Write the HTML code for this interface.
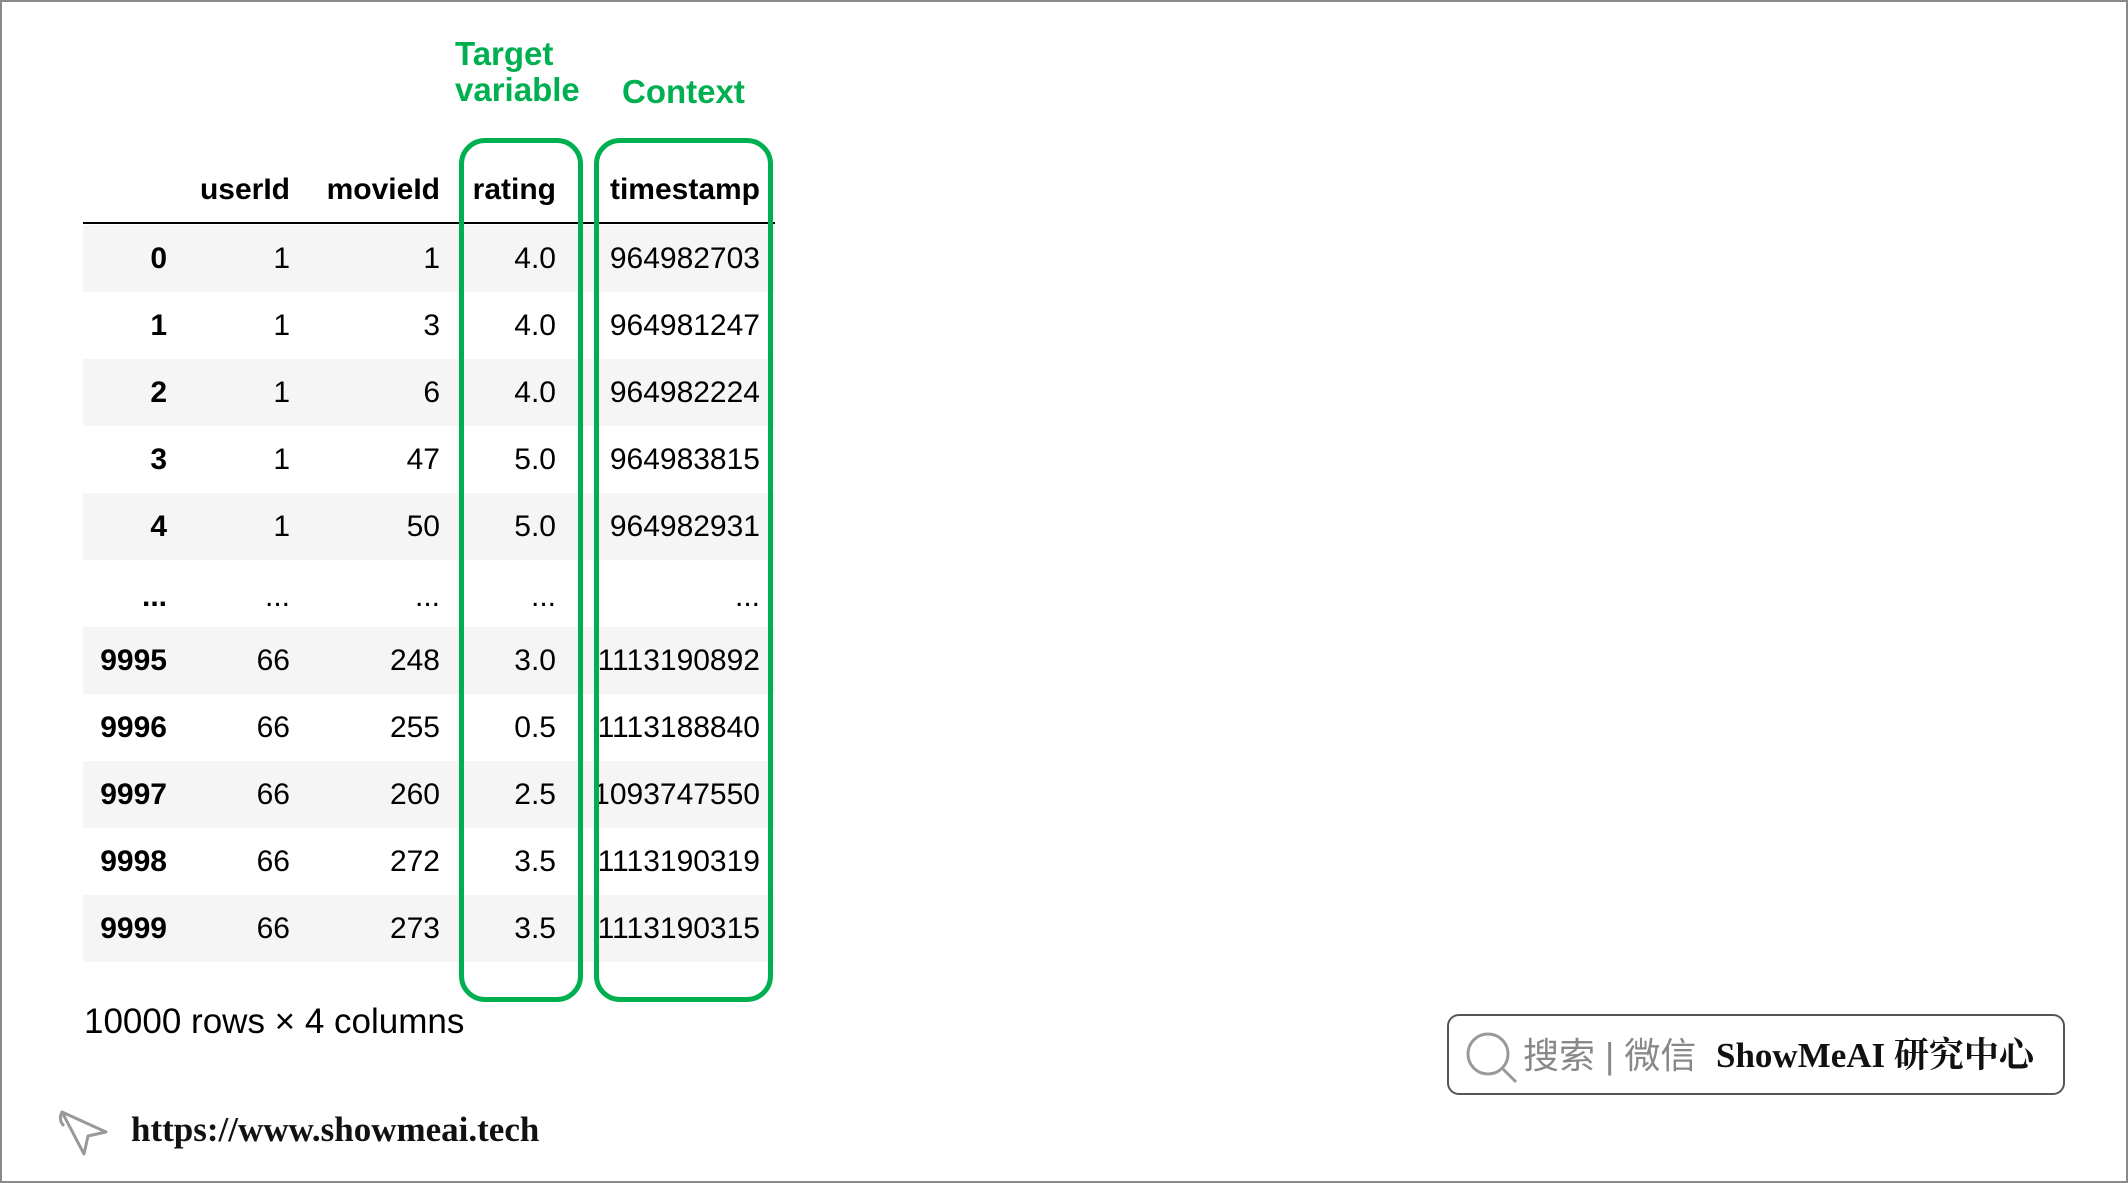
<!DOCTYPE html>
<html><head><meta charset="utf-8"><style>
body{margin:0;width:2128px;height:1183px;background:#fff;position:relative;overflow:hidden;font-family:"Liberation Sans",Arial,sans-serif;}
.frame{position:absolute;left:0;top:0;width:2124px;height:1179px;border:2px solid #8a8a8a;}
.g{position:absolute;color:#00b050;font-weight:bold;font-size:33px;line-height:36px;}
.box{position:absolute;border:5px solid #00b050;border-radius:26px;box-sizing:border-box;}
.row{position:absolute;left:83px;width:692px;height:67px;}
.row.s{background:#f5f5f5;}
.c{position:absolute;font-size:30px;line-height:67px;text-align:right;color:#000;}
.h{font-weight:bold;}
</style></head><body>
<div class="frame"></div>
<div class="g" style="left:455px;top:36px">Target<br>variable</div>
<div class="g" style="left:622px;top:74px">Context</div>

<div class="row" style="top:156px">
<div class="c h" style="right:485px;width:200px">userId</div>
<div class="c h" style="right:335px;width:200px">movieId</div>
<div class="c h" style="right:219px;width:200px">rating</div>
<div class="c h" style="right:15px;width:200px">timestamp</div>
</div>
<div style="position:absolute;left:83px;top:222px;width:692px;height:2px;background:#000"></div>

<div id="rows"></div>
<script>
var d=[["0","1","1","4.0","964982703"],["1","1","3","4.0","964981247"],["2","1","6","4.0","964982224"],["3","1","47","5.0","964983815"],["4","1","50","5.0","964982931"],["...","...","...","...","..."],["9995","66","248","3.0","1113190892"],["9996","66","255","0.5","1113188840"],["9997","66","260","2.5","1093747550"],["9998","66","272","3.5","1113190319"],["9999","66","273","3.5","1113190315"]];
var rights=[608,485,335,219,15],h="";
var tops=[225,292,359,426,493,563,627,694,761,828,895];
d.forEach(function(r,i){var s=(i<5&&i%2==0)||(i>5&&i%2==0);h+='<div class="row'+(s?' s':'')+'" style="top:'+tops[i]+'px">';
r.forEach(function(v,j){h+='<div class="c'+(j==0?' h':'')+'" style="right:'+rights[j]+'px;width:200px">'+v+'</div>';});h+='</div>';});
document.getElementById('rows').innerHTML=h;
</script>
<div class="box" style="left:459px;top:138px;width:124px;height:864px"></div>
<div class="box" style="left:594px;top:138px;width:179px;height:864px"></div>

<div style="position:absolute;left:84px;top:999px;font-size:35px;line-height:46px">10000 rows × 4 columns</div>

<div style="position:absolute;left:1447px;top:1014px;width:618px;height:81px;border:2px solid #555;border-radius:12px;box-sizing:border-box"></div>
<svg style="position:absolute;left:1464px;top:1030px" width="56" height="56" viewBox="0 0 56 56"><circle cx="24" cy="24" r="20" fill="none" stroke="#999" stroke-width="3"/><path d="M38 38 L52 52" stroke="#999" stroke-width="3"/></svg>
<div style="position:absolute;left:1523px;top:1033px;font-size:36px;line-height:46px;color:#888;font-family:'Liberation Sans','Noto Sans CJK SC',sans-serif">搜索 | 微信</div>
<div style="position:absolute;left:1716px;top:1033px;font-size:35px;line-height:46px;color:#111;font-weight:bold;font-family:'Liberation Serif','Noto Serif CJK SC',serif">ShowMeAI 研究中心</div>

<svg style="position:absolute;left:58px;top:1106px" width="54" height="52" viewBox="0 0 54 52"><path d="M4 6 L48 26 L30 30 L26 48 Z" fill="none" stroke="#999" stroke-width="3" stroke-linejoin="round"/><path d="M4 6 Q0 14 6 20" fill="none" stroke="#999" stroke-width="3"/></svg>
<div style="position:absolute;left:131px;top:1109px;font-size:35px;line-height:42px;font-weight:bold;font-family:'Liberation Serif',serif;color:#111">https://www.showmeai.tech</div>
</body></html>
